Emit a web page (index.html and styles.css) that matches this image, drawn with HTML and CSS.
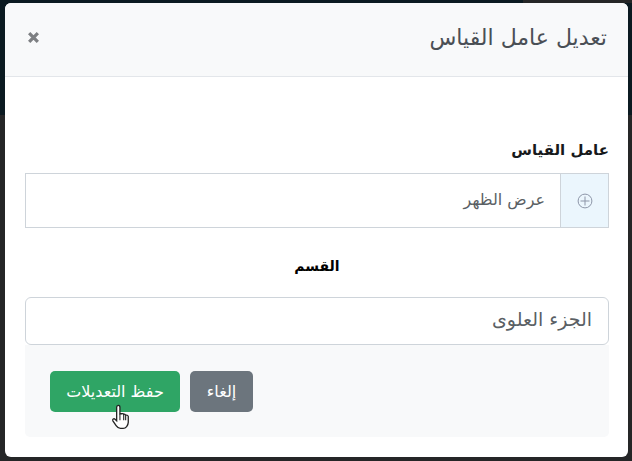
FILE: index.html
```html
<!DOCTYPE html>
<html lang="ar" dir="rtl">
<head>
    <meta charset="UTF-8">
    <title>تعديل عامل القياس</title>
    <link rel="stylesheet" href="styles.css">
</head>
<body>
    <div class="backdrop">
        <div class="modal">
            <div class="modal-header">
                <h4 class="modal-title">تعديل عامل القياس</h4>
                <svg class="close-icon" viewBox="0 0 12 12" width="13" height="13">
                    <path d="M2 2 L10 10 M10 2 L2 10" stroke="#7d7f82" stroke-width="3" fill="none"/>
                </svg>
            </div>
            <div class="modal-body">
                <label class="field-label">عامل القياس</label>
                <div class="input-group">
                    <span class="addon">
                        <svg viewBox="0 0 16 16" width="16" height="16">
                            <circle cx="8" cy="8" r="6.9" stroke="#8d96a8" fill="none"/>
                            <path d="M8 3.5 V12.5 M3.5 8 H12.5" stroke="#8d96a8" fill="none"/>
                        </svg>
                    </span>
                    <div class="input-text">عرض الظهر</div>
                </div>
                <div class="section-label">القسم</div>
                <div class="select-box">الجزء العلوى</div>
                <div class="form-footer">
                    <button class="btn btn-grey">إلغاء</button>
                    <button class="btn btn-green">حفظ التعديلات</button>
                </div>
            </div>
        </div>
        <svg class="cursor" viewBox="0 0 18 24" width="20" height="26">
            <path d="M6 1.5 C7 1 8 1.5 8 3 V9 L9.8 9 C10.5 8.6 11.2 8.8 11.5 9.6 C12.3 9.2 13 9.5 13.3 10.3 C14.2 10 15.5 10.5 15.7 11.5 L15.7 17 C15.5 20 13.5 22.5 11 22.5 L8.5 22.5 C6.5 22.5 5.5 21.5 4.5 20 L1.5 15.5 C0.8 14.3 2.3 13 3.5 14 L5 15.5 V3 C5 2.2 5.4 1.7 6 1.5 Z" fill="#fff" stroke="#222" stroke-width="1.2"/>
            <path d="M8 9 V15 M11.5 9.6 V15 M13.3 10.3 V15" stroke="#222" fill="none"/>
        </svg>
    </div>
</body>
</html>
```

FILE: styles.css
```css
* {
    box-sizing: border-box;
}
html, body {
    margin: 0;
    height: 100%;
}
body {
    font-family: "DejaVu Sans", sans-serif;
    background-color: #0c1a20;
    overflow: hidden;
}
.backdrop {
    position: relative;
    height: 461px;
    padding: 3px 4px 4px 5px;
    background: linear-gradient(to right, #0b1a21 523px, #252627 523px) top / 100% 3px no-repeat,
        linear-gradient(to bottom, #0b1a21 115px, #252627 115px);
}
.modal {
    height: 454px;
    background-color: #fff;
    border-radius: 6px;
    overflow: hidden;
}
.modal-header {
    height: 74px;
    padding: 0 21px 4px 22px;
    display: flex;
    align-items: center;
    justify-content: space-between;
    background-color: #f8f9fa;
    border-bottom: 1px solid #e3e6ea;
}
.modal-title {
    margin: 0;
    font-size: 22px;
    font-weight: 400;
    color: #4a4f55;
}
.modal-body {
    padding: 61px 19px 0 20px;
}
.field-label {
    display: block;
    height: 35px;
    padding-top: 3px;
    font-size: 15px;
    font-weight: 700;
    color: #17191b;
}
.input-group {
    height: 55px;
    display: flex;
    border: 1px solid #ced4da;
}
.addon {
    width: 48px;
    display: flex;
    align-items: center;
    justify-content: center;
    background-color: #ebf6fd;
    border-left: 1px solid #ced4da;
}
.input-text {
    flex: 1;
    padding-right: 15px;
    line-height: 51px;
    font-size: 16px;
    color: #5a5f64;
}
.section-label {
    height: 69px;
    padding-top: 30px;
    text-align: center;
    font-size: 14px;
    font-weight: 700;
    color: #000;
}
.select-box {
    height: 48px;
    padding-right: 16px;
    line-height: 43px;
    font-size: 19px;
    color: #5a5f64;
    border: 1px solid #ced4da;
    border-radius: 6px;
}
.form-footer {
    height: 92px;
    padding: 26px 25px 0;
    display: flex;
    justify-content: flex-end;
    gap: 10px;
    background-color: #f8f9fa;
    border-radius: 0 0 5px 5px;
}
.btn {
    height: 41px;
    padding: 0;
    border: 0;
    border-radius: 5px;
    font-family: inherit;
    font-size: 16px;
    color: #fff;
}
.btn-grey {
    width: 63px;
    background-color: #6c757d;
}
.btn-green {
    width: 130px;
    background-color: #2fa565;
}
.cursor {
    position: absolute;
    left: 111px;
    top: 404px;
}
```
